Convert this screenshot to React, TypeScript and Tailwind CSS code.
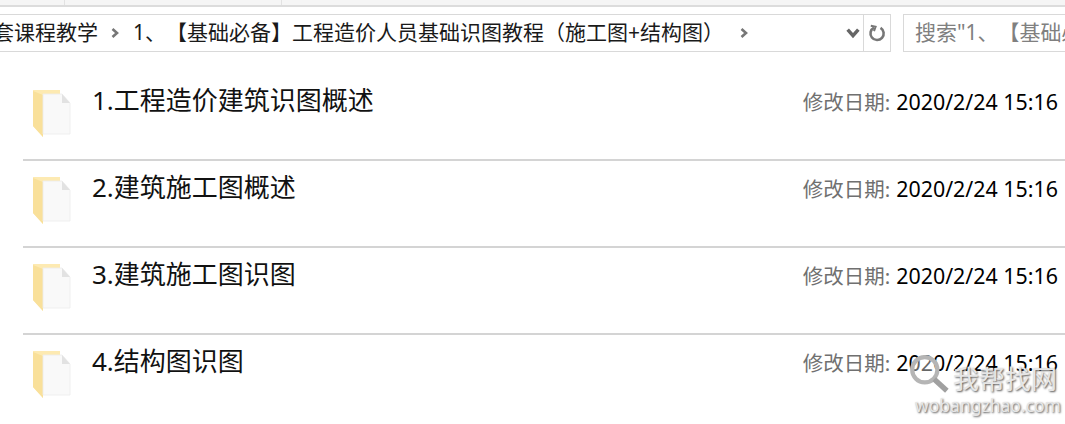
const font = { fontFamily: '"Noto Sans", "Noto Sans CJK SC", sans-serif' };

const folders = [
  "1.工程造价建筑识图概述",
  "2.建筑施工图概述",
  "3.建筑施工图识图",
  "4.结构图识图",
];

function Chevron({ className }: { className?: string }) {
  return (
    <svg viewBox="0 0 10 12" className={className} fill="none" stroke="currentColor" strokeWidth="2.6">
      <path d="M2.5 2 L7 6 L2.5 10" />
    </svg>
  );
}

function FolderIcon() {
  return (
    <svg viewBox="0 0 40 50" className="w-[40px] h-[50px] shrink-0">
      <path d="M1 1 L28 1 L28 5 L11 5 L11 48 L1 37 Z" fill="#fdeab2" />
      <path d="M1 2 L11 6 L11 48 L1 37 Z" fill="#f9e09a" />
      <path d="M11 5 L30 5 L38 14 L38 45 L11 45 Z" fill="#f9f9f9" stroke="#ececec" strokeWidth="0.8" />
      <path d="M30 5 L30 14 L38 14 Z" fill="#e2e2e2" />
    </svg>
  );
}

export default function App() {
  return (
    <div className="relative w-[1065px] h-[424px] overflow-hidden bg-white" style={font}>
      {/* top toolbar edge */}
      <div className="h-[7px] bg-[#f5f5f5] border-b-2 border-[#dcdcdc] flex">
        <div className="w-[65px] border-r border-[#e2e2e2]" />
        <div className="w-[217px] border-r border-[#e2e2e2]" />
      </div>

      {/* address row */}
      <div className="mt-[7px] flex items-start">
        <div className="w-[891px] h-[38px] border-y border-r border-[#d9d9d9] flex items-center text-[21px] text-[#1a1a1a] whitespace-nowrap overflow-hidden [text-spacing-trim:space-all]">
          <div className="flex-1 min-w-0 flex items-center overflow-hidden">
            <span className="ml-[-7px]">套课程教学</span>
            <Chevron className="w-[10px] h-[12px] ml-[12px] text-[#777777]" />
            <span className="ml-[13px]">1、【基础必备】工程造价人员基础识图教程（施工图+结构图）</span>
            <Chevron className="w-[10px] h-[12px] ml-[15px] text-[#777777]" />
          </div>
          <Chevron className="w-[14px] h-[16px] rotate-90 mr-[3px] text-[#666666]" />
          <div className="w-[27px] h-full border-l border-[#d9d9d9] flex items-center justify-center">
            <svg viewBox="0 0 18 18" className="w-[18px] h-[18px] text-[#777777]" fill="none" stroke="currentColor" strokeWidth="2.6">
              <path d="M6 3.6 A6.6 6.6 0 1 0 12.5 3.8" />
              <path d="M2.8 1.8 L7.6 2.8 L6 7.2" strokeWidth="2" />
            </svg>
          </div>
        </div>
        <div className="ml-[12px] flex-1 min-w-0 h-[38px] border-y border-l border-[#d9d9d9] pl-[11px] flex items-center text-[21px] text-[#808080] whitespace-nowrap overflow-hidden [text-spacing-trim:space-all]">
          搜索"1、【基础必备】
        </div>
      </div>

      {/* file list */}
      <div className="ml-[23px] mt-[22px]">
        {folders.map((name, i) => (
          <div
            key={name}
            className={`h-[87px] flex items-start ${i < folders.length - 1 ? "border-b-2 border-[#d4d4d4]" : ""}`}
          >
            <div className="ml-[9px] mt-[15px]">
              <FolderIcon />
            </div>
            <div className="ml-[20px] mt-[8px] text-[26px] leading-[36px] text-[#111111] flex-1 whitespace-nowrap">
              {name}
            </div>
            <div className="mt-[13px] mr-[7px] text-[21.4px] leading-[30px] whitespace-nowrap">
              <span className="text-[#707070] text-[20.5px]">修改日期:</span>
              <span className="ml-[6px] text-black">2020/2/24 15:16</span>
            </div>
          </div>
        ))}
      </div>

      {/* watermark */}
      <div className="absolute left-[908px] top-[354px] w-[155px] text-[#e6e6e6] [text-shadow:1px_1px_2px_#555555]">
        <div className="flex items-start gap-[3px]">
          <svg viewBox="0 0 40 40" className="w-[42px] h-[42px]" fill="none">
            <circle cx="16" cy="15" r="12" stroke="#b5b5b5" strokeWidth="4" fill="#ffffff" fillOpacity="0.4" />
            <path d="M25 24 L37 35" stroke="#a0a0a0" strokeWidth="5" />
          </svg>
          <span className="mt-[10px] text-[26px] leading-[30px]">我帮找网</span>
        </div>
        <div className="mt-[-2px] ml-[7px] text-[17.5px] leading-[22px] whitespace-nowrap">wobangzhao.com</div>
      </div>
    </div>
  );
}
